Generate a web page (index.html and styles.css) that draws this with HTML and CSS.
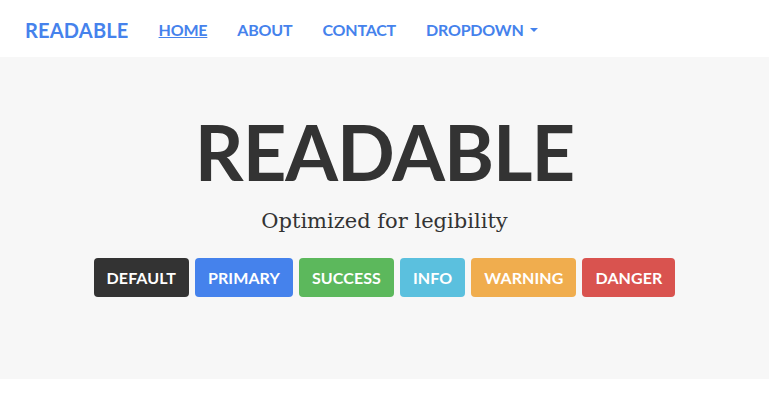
FILE: index.html
```html
<!DOCTYPE html>
<html>
<head>
<meta charset="utf-8">
<link rel="stylesheet" href="styles.css">
</head>
<body>
<nav class="navbar">
  <a class="brand" href="#">READABLE</a>
  <ul class="nav">
    <li><a class="active" href="#">HOME</a></li>
    <li><a href="#">ABOUT</a></li>
    <li><a href="#">CONTACT</a></li>
    <li><a href="#">DROPDOWN <span class="caret"></span></a></li>
  </ul>
</nav>
<header class="jumbotron">
  <h1 class="title">READABLE</h1>
  <p class="lead">Optimized for legibility</p>
  <div class="buttons">
    <a class="btn btn-default" href="#">DEFAULT</a>
    <a class="btn btn-primary" href="#">PRIMARY</a>
    <a class="btn btn-success" href="#">SUCCESS</a>
    <a class="btn btn-info" href="#">INFO</a>
    <a class="btn btn-warning" href="#">WARNING</a>
    <a class="btn btn-danger" href="#">DANGER</a>
  </div>
</header>
</body>
</html>
```
FILE: styles.css
```css
* { box-sizing: border-box; }
html, body { margin: 0; padding: 0; background: #fff; }
body { font-family: Lato, "Open Sans", sans-serif; color: #333; }
a { text-decoration: none; }

.navbar {
  height: 57px;
  display: flex;
  align-items: center;
  padding-left: 25px;
  padding-top: 2px;
  background: #fff;
}
.brand {
  color: #4582ec;
  font-weight: 700;
  font-size: 20px;
  letter-spacing: 0.2px;
  margin-right: 15px;
}
.nav {
  list-style: none;
  margin: 0;
  padding: 0;
  display: flex;
}
.nav a {
  display: flex;
  align-items: center;
  padding: 0 15px;
  color: #4582ec;
  font-weight: 700;
  font-size: 16px;
  letter-spacing: -0.2px;
}
.nav a.active { text-decoration: underline; }
.caret {
  display: inline-block;
  width: 0; height: 0;
  margin-left: 6px;
  border-top: 4px solid #4582ec;
  border-left: 4px solid transparent;
  border-right: 4px solid transparent;
}

.jumbotron {
  background: #f7f7f7;
  height: 322px;
  display: flex;
  flex-direction: column;
  align-items: center;
  padding-top: 57px;
}
.title {
  margin: 0;
  font-size: 76px;
  font-weight: 700;
  line-height: 1;
  letter-spacing: -1px;
  color: #333;
}
.lead {
  margin: 19px 0 0;
  font-family: "DejaVu Serif", Georgia, serif;
  font-size: 21px;
  color: #333;
}
.buttons {
  margin-top: 25px;
  display: flex;
  gap: 6px;
}
.btn {
  height: 39px;
  display: flex;
  align-items: center;
  padding: 0 13px;
  border-radius: 4px;
  color: #fff;
  font-weight: 700;
  font-size: 16px;
  letter-spacing: 0.1px;
}
.btn-default { background: #333333; }
.btn-primary { background: #4582ec; }
.btn-success { background: #5cb85c; }
.btn-info { background: #5bc0de; }
.btn-warning { background: #f0ad4e; }
.btn-danger { background: #d9534f; }
```
